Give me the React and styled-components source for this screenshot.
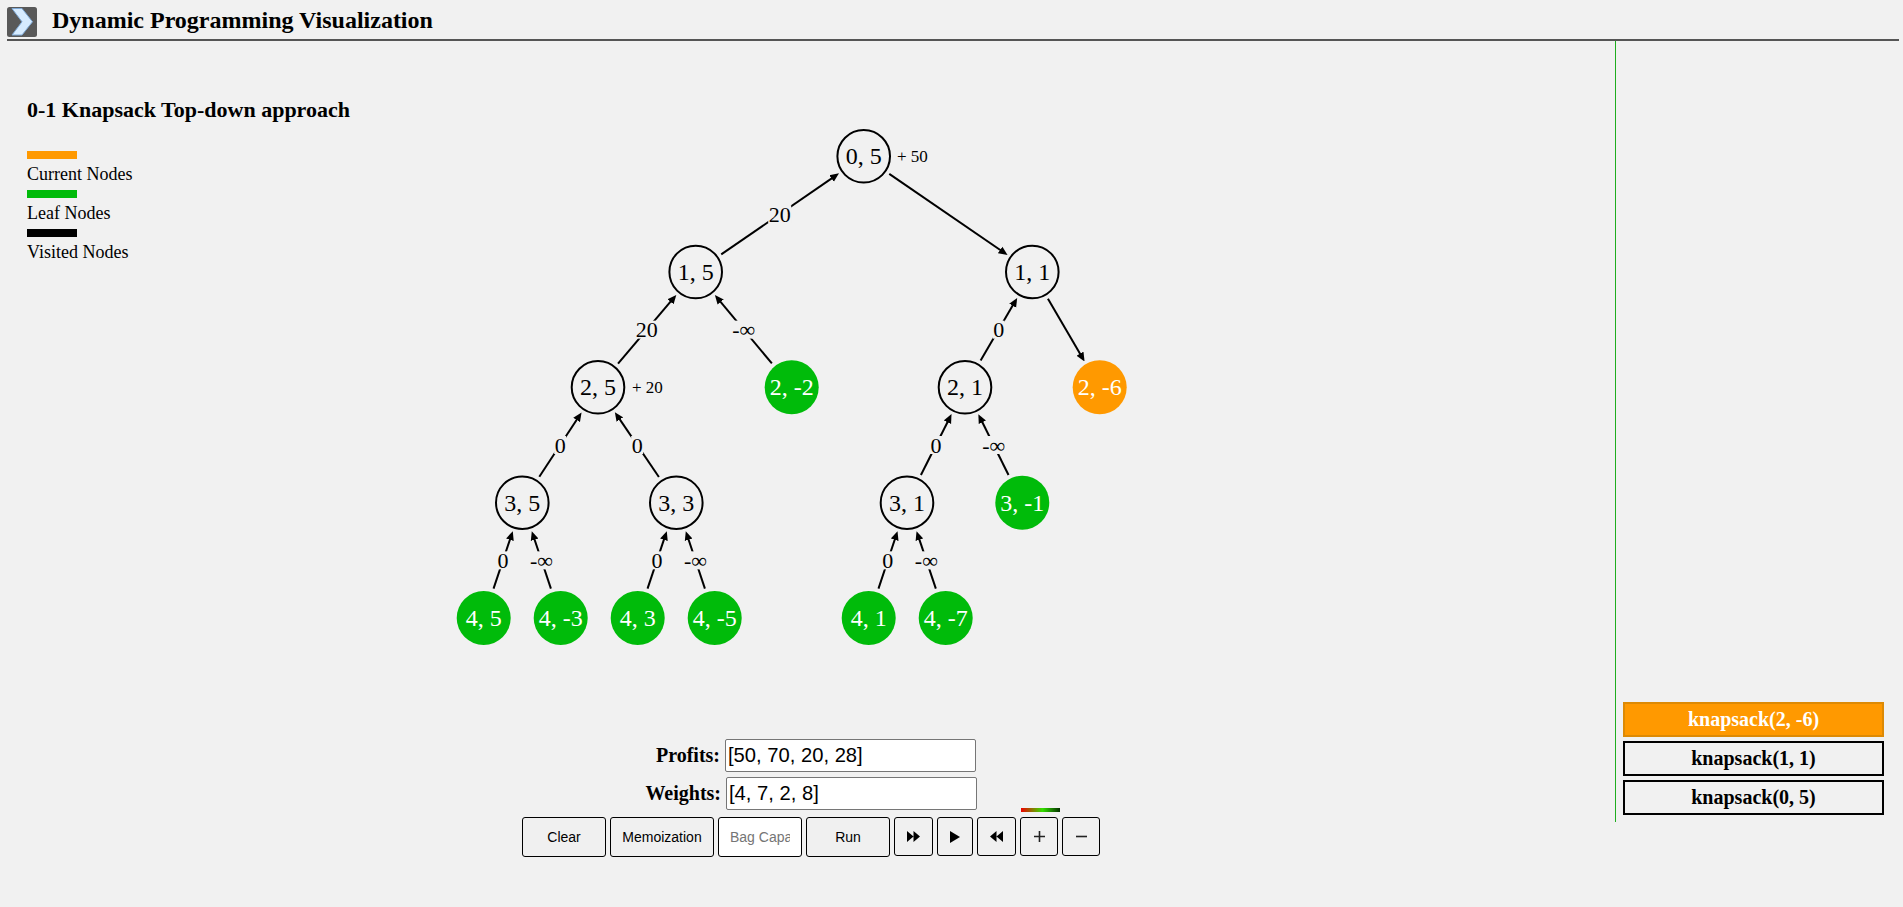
import React from "react";
import styled, { createGlobalStyle } from "styled-components";

const Global = createGlobalStyle`
  html, body { margin: 0; height: 100%; background: #f1f1f1; overflow: hidden; }
  body { font-family: "Liberation Serif", "Times New Roman", serif; color: #000; }
  * { box-sizing: border-box; }
`;

const Page = styled.div`
  height: 907px;
  padding: 7px 4px 0 7px;
  display: flex;
  flex-direction: column;
`;
const Header = styled.header`
  height: 34px;
  display: flex;
  align-items: flex-start;
  gap: 15px;
  border-bottom: 2px solid #555;
`;
const Logo = styled.svg`
  width: 30px;
  height: 30px;
  display: block;
`;
const Title = styled.h1`
  margin: 0;
  font-size: 24px;
  line-height: 26px;
  font-weight: bold;
`;
const Body = styled.div`
  display: flex;
  height: 781px;
`;
const Main = styled.main`
  width: 1608px;
  height: 100%;
  position: relative;
  padding: 56px 0 0 20px;
`;
const Heading = styled.h2`
  margin: 0 0 28px;
  font-size: 22px;
  line-height: 26px;
  font-weight: bold;
`;
const Legend = styled.div`
  display: flex;
  flex-direction: column;
`;
const Swatch = styled.div`
  width: 50px;
  height: 8px;
  background: ${(p) => p.$color};
`;
const LegendLabel = styled.div`
  font-size: 18px;
  line-height: 21px;
  height: 31px;
  padding-top: 5px;
`;
const Canvas = styled.svg`
  position: absolute;
  left: -7px;
  top: -41px;
  width: 1300px;
  height: 720px;
  font-family: "Liberation Serif", "Times New Roman", serif;
`;
const Controls = styled.div`
  margin-top: 471px;
  display: flex;
  flex-direction: column;
  position: relative;
`;
const FieldRow = styled.label`
  display: flex;
  align-items: center;
  height: 33px;
  margin-bottom: 5px;
  padding-left: ${(p) => p.$pad}px;
  gap: 5px;
  font-size: 20px;
  font-weight: bold;
`;
const FieldLabel = styled.span`
  width: 693px;
  text-align: right;
`;
const Field = styled.input`
  width: 251px;
  height: 33px;
  border: 1px solid #767676;
  border-radius: 2px;
  background: #fff;
  padding: 1px 2px;
  font: 20.2px "Liberation Sans", Arial, sans-serif;
  color: #000;
`;
const ButtonRow = styled.div`
  display: flex;
  align-items: flex-start;
  gap: 4px;
  padding-left: 495px;
  position: relative;
  margin-top: 2px;
`;
const Btn = styled.button`
  width: ${(p) => p.$w}px;
  height: ${(p) => p.$h || 40}px;
  border: 1px solid #000;
  border-radius: 3px;
  background: #f0f0f0;
  padding: 0;
  font: 14px "Liberation Sans", Arial, sans-serif;
  color: #000;
  display: flex;
  align-items: center;
  justify-content: center;
`;
const BagInput = styled.input`
  width: 84px;
  height: 40px;
  border: 1px solid #000;
  border-radius: 3px;
  background: #fff;
  padding: 1px 11px;
  font: 14px "Liberation Sans", Arial, sans-serif;
  &::placeholder { color: #757575; opacity: 1; }
`;
const SpeedBar = styled.div`
  position: absolute;
  left: 994px;
  top: -9px;
  width: 39px;
  height: 4px;
  background: linear-gradient(to right, #f00000, #33e000 55%, #053000);
`;
const Side = styled.aside`
  width: 284px;
  height: 100%;
  border-left: 1px solid #1fae1f;
  padding: 0 0 7px 7px;
  display: flex;
  flex-direction: column;
  justify-content: flex-end;
  gap: 4px;
`;
const Frame = styled.div`
  width: 261px;
  height: 35px;
  display: flex;
  align-items: center;
  justify-content: center;
  font-size: 20px;
  font-weight: bold;
  border: 2px solid ${(p) => (p.$active ? "#dd8a05" : "#000")};
  background: ${(p) => (p.$active ? "#ff9900" : "transparent")};
  color: ${(p) => (p.$active ? "#fff" : "#000")};
`;

const R = 27;
const GREEN = "#00bb0a";
const ORANGE = "#ff9900";
const nodes = {
  a: { x: 863.7, y: 156.3, t: "0, 5" },
  b: { x: 695.7, y: 272, t: "1, 5" },
  c: { x: 1032.3, y: 272, t: "1, 1" },
  d: { x: 598, y: 387.3, t: "2, 5" },
  e: { x: 791.7, y: 387.3, t: "2, -2", f: GREEN },
  f: { x: 965, y: 387.3, t: "2, 1" },
  g: { x: 1099.7, y: 387.3, t: "2, -6", f: ORANGE },
  h: { x: 522.3, y: 502.7, t: "3, 5" },
  i: { x: 676.3, y: 502.7, t: "3, 3" },
  j: { x: 907, y: 502.7, t: "3, 1" },
  k: { x: 1022.3, y: 502.7, t: "3, -1", f: GREEN },
  l: { x: 483.7, y: 618, t: "4, 5", f: GREEN },
  m: { x: 560.7, y: 618, t: "4, -3", f: GREEN },
  n: { x: 637.7, y: 618, t: "4, 3", f: GREEN },
  o: { x: 714.7, y: 618, t: "4, -5", f: GREEN },
  p: { x: 868.7, y: 618, t: "4, 1", f: GREEN },
  q: { x: 945.7, y: 618, t: "4, -7", f: GREEN },
};
const INF = "-∞";
const edges = [
  ["b", "a", "20"], ["a", "c"], ["d", "b", "20"], ["e", "b", INF], ["f", "c", "0"], ["c", "g"],
  ["h", "d", "0"], ["i", "d", "0"], ["j", "f", "0"], ["k", "f", INF],
  ["l", "h", "0"], ["m", "h", INF], ["n", "i", "0"], ["o", "i", INF], ["p", "j", "0"], ["q", "j", INF],
];

function Edge({ from, to, label }) {
  const A = nodes[from], B = nodes[to];
  const dx = B.x - A.x, dy = B.y - A.y, len = Math.hypot(dx, dy);
  const ux = dx / len, uy = dy / len;
  const x1 = A.x + ux * (R + 4), y1 = A.y + uy * (R + 4);
  const x2 = B.x - ux * (R + 7), y2 = B.y - uy * (R + 7);
  const mx = (A.x + B.x) / 2, my = (A.y + B.y) / 2;
  const w = label ? label.length * 11 + 1 : 0;
  return (
    <g>
      <line x1={x1} y1={y1} x2={x2} y2={y2} stroke="#000" strokeWidth="2" markerEnd="url(#arrow)" />
      {label && (
        <>
          <rect x={mx - w / 2} y={my - 9} width={w} height="18" fill="#f1f1f1" />
          <text x={mx} y={my + 7.5} fontSize="22" textAnchor="middle" fill="#000">{label}</text>
        </>
      )}
    </g>
  );
}

const Chevron = () => (
  <Logo viewBox="0 0 30 30">
    <rect width="30" height="30" rx="2.5" fill="#595959" />
    <path d="M5 1.5h10l10.5 13.3L15 28H5l10-13.2z" fill="#d6ebff" stroke="#7fa9d6" strokeWidth="1" />
  </Logo>
);
const Ff = ({ flip }) => (
  <svg width="13" height="11" viewBox="0 0 13 11" style={flip ? { transform: "scaleX(-1)" } : undefined}>
    <path d="M0 0l6.5 5.5L0 11zM6.5 0L13 5.5 6.5 11z" fill="#000" />
  </svg>
);
const Play = () => (
  <svg width="10" height="12" viewBox="0 0 10 12"><path d="M0 0l10 6-10 6z" fill="#000" /></svg>
);
const Plus = () => (
  <svg width="11" height="11" viewBox="0 0 11 11"><path d="M5.5 0v11M0 5.5h11" stroke="#222" strokeWidth="1.6" /></svg>
);
const Minus = () => (
  <svg width="11" height="11" viewBox="0 0 11 11"><path d="M0 5.5h11" stroke="#222" strokeWidth="1.6" /></svg>
);

export default function App() {
  return (
    <Page>
      <Global />
      <Header>
        <Chevron />
        <Title>Dynamic Programming Visualization</Title>
      </Header>
      <Body>
        <Main>
          <Canvas viewBox="0 0 1300 720">
            <defs>
              <marker id="arrow" markerUnits="userSpaceOnUse" markerWidth="9" markerHeight="9" refX="5" refY="4.5" orient="auto">
                <path d="M0 0.5L9 4.5L0 8.5z" fill="#000" />
              </marker>
            </defs>
            {edges.map(([f, t, l]) => <Edge key={f + t} from={f} to={t} label={l} />)}
            {Object.entries(nodes).map(([k, n]) => (
              <g key={k}>
                <circle cx={n.x} cy={n.y} r={n.f ? 27 : 26.3} fill={n.f || "none"} stroke={n.f ? "none" : "#000"} strokeWidth="2" />
                <text x={n.x} y={n.y + 8} fontSize="24" textAnchor="middle" fill={n.f ? "#fff" : "#000"}>{n.t}</text>
              </g>
            ))}
            <text x="897" y="161.5" fontSize="17" fill="#000">+ 50</text>
            <text x="632" y="392.5" fontSize="17" fill="#000">+ 20</text>
          </Canvas>
          <Heading>0-1 Knapsack Top-down approach</Heading>
          <Legend>
            <Swatch $color="#ff9900" />
            <LegendLabel>Current Nodes</LegendLabel>
            <Swatch $color="#00bb0a" />
            <LegendLabel>Leaf Nodes</LegendLabel>
            <Swatch $color="#000" />
            <LegendLabel>Visited Nodes</LegendLabel>
          </Legend>
          <Controls>
            <FieldRow $pad={0}>
              <FieldLabel>Profits:</FieldLabel>
              <Field defaultValue="[50, 70, 20, 28]" />
            </FieldRow>
            <FieldRow $pad={1}>
              <FieldLabel>Weights:</FieldLabel>
              <Field defaultValue="[4, 7, 2, 8]" />
            </FieldRow>
            <ButtonRow>
              <Btn $w={84}>Clear</Btn>
              <Btn $w={104}>Memoization</Btn>
              <BagInput placeholder="Bag Capacity" />
              <Btn $w={84}>Run</Btn>
              <Btn $w={39} $h={39}><Ff /></Btn>
              <Btn $w={36} $h={39}><Play /></Btn>
              <Btn $w={39} $h={39}><Ff flip /></Btn>
              <Btn $w={38} $h={39}><Plus /></Btn>
              <Btn $w={38} $h={39}><Minus /></Btn>
              <SpeedBar />
            </ButtonRow>
          </Controls>
        </Main>
        <Side>
          <Frame $active>knapsack(2, -6)</Frame>
          <Frame>knapsack(1, 1)</Frame>
          <Frame>knapsack(0, 5)</Frame>
        </Side>
      </Body>
    </Page>
  );
}
